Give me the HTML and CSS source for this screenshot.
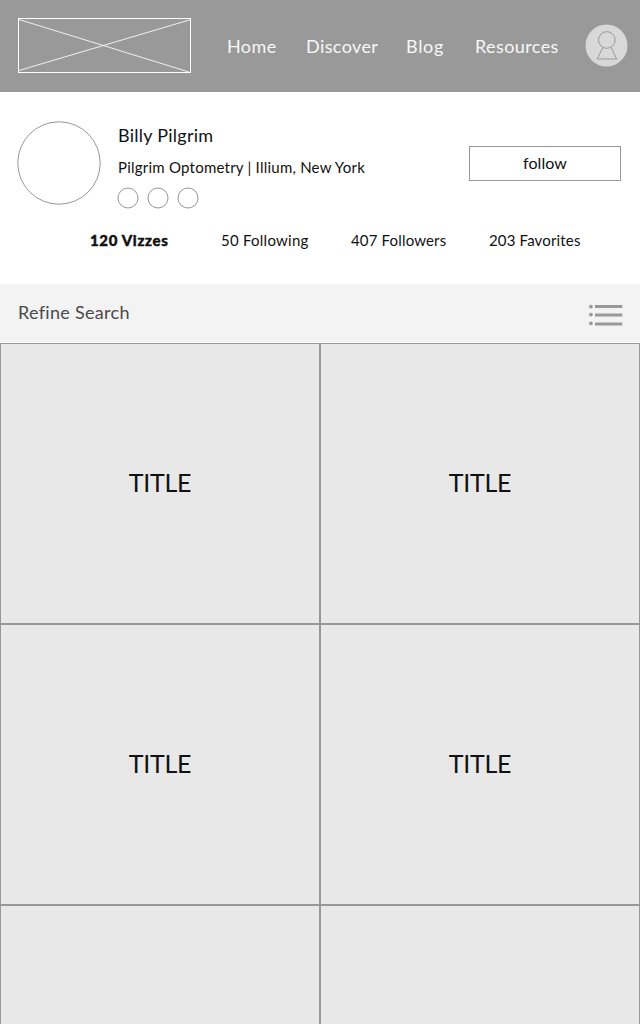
FILE: index.html
```
<!DOCTYPE html>
<html lang="en">
<head>
<meta charset="utf-8">
<title>Billy Pilgrim</title>
<link rel="stylesheet" href="styles.css">
</head>
<body>
<header class="topbar">
  <svg class="logo" width="174" height="55" viewBox="0 0 174 55" fill="none" stroke="#fff">
    <rect x=".5" y=".5" width="172" height="54"/>
    <path d="M1 1.5L171 54M1 52.5L173 1.5" stroke-opacity=".85"/>
  </svg>
  <nav class="nav">
    <a class="home">Home</a><a class="discover">Discover</a><a class="blog">Blog</a><a class="resources">Resources</a>
  </nav>
  <svg class="account" width="43" height="43" viewBox="0 0 43 43" fill="none" stroke="#999">
    <circle cx="21.5" cy="21.5" r="21" fill="#d8d8d8" stroke="none"/>
    <circle cx="21.8" cy="16" r="8.3"/>
    <path d="M17.8 23.6L12.2 35H31.7L26.3 23.6"/>
  </svg>
</header>
<section class="profile">
  <div class="person">
    <svg class="avatar" width="84" height="84" fill="none" stroke="#979797"><circle cx="42" cy="42" r="41.2"/></svg>
    <div class="details">
      <h1 class="name">Billy Pilgrim</h1>
      <p class="place">Pilgrim Optometry | Illium, New York</p>
      <svg class="social" width="84" height="22" fill="none" stroke="#979797">
        <circle cx="11" cy="11" r="10"/><circle cx="41" cy="11" r="10"/><circle cx="71" cy="11" r="10"/>
      </svg>
    </div>
    <button class="follow">follow</button>
  </div>
  <div class="stats">
    <span class="active">120 Vizzes</span><span class="following">50 Following</span><span class="followers">407 Followers</span><span class="favorites">203 Favorites</span>
  </div>
</section>
<div class="refine">
  <span class="refine-label">Refine Search</span>
  <svg class="list" width="34" height="22" viewBox="0 0 34 22" fill="#999">
    <circle cx="1.9" cy="2.6" r="1.9"/><circle cx="1.9" cy="10.6" r="1.9"/><circle cx="1.9" cy="19.3" r="1.9"/>
    <path d="M6 1h27.3v3H6zM6 9.6h27.3v3H6zM6 18.4h27.3v3H6z"/>
  </svg>
</div>
<main class="grid">
  <article class="tile">TITLE</article><article class="tile">TITLE</article>
  <article class="tile">TITLE</article><article class="tile">TITLE</article>
  <article class="tile last"></article><article class="tile last"></article>
</main>
</body>
</html>
```
FILE: styles.css
```
* { box-sizing: border-box; }
body {
  margin: 0;
  background: #fff;
  color: #111;
  font-family: Lato, "Liberation Sans", sans-serif;
}
.topbar {
  display: flex;
  height: 92px;
  padding: 18px 12px 0 18px;
  background: #999;
}
.logo { flex: none; }
.nav {
  display: grid;
  grid-template-columns: 79px 100px 69px 110px;
  margin-left: 35px;
  padding-top: 17px;
  color: #f7f7f7;
  font-size: 18px;
  line-height: 22px;
  letter-spacing: .4px;
  white-space: nowrap;
}
.blog { letter-spacing: .7px; }
.account { flex: none; margin-top: 6px; }
.profile { height: 192px; padding: 29px 19px 0 17px; }
.person { display: flex; height: 109px; }
.avatar { flex: none; }
.details { width: 368px; padding-left: 17px; white-space: nowrap; }
.name { margin: 3px 0 0; font-size: 18px; font-weight: 400; line-height: 22px; letter-spacing: .25px; }
.place { margin: 11px 0 0; font-size: 15px; line-height: 20px; letter-spacing: .23px; }
.social { display: block; margin: 10px 0 0 -1px; }
.follow {
  width: 152px;
  height: 35px;
  margin-top: 25px;
  padding: 0 0 2px;
  border: 1px solid #979797;
  background: #fff;
  color: #111;
  font: 16px/20px Lato, "Liberation Sans", sans-serif;
  letter-spacing: .1px;
}
.stats {
  display: grid;
  grid-template-columns: 131px 130px 138px 110px;
  padding-left: 73px;
  font-size: 15px;
  line-height: 20px;
  letter-spacing: .16px;
  white-space: nowrap;
}
.active { font-weight: 900; letter-spacing: .65px; -webkit-text-stroke: .4px #111; }
.following { letter-spacing: .25px; }
.refine {
  display: flex;
  justify-content: space-between;
  height: 59px;
  padding: 17px 17px 0 18px;
  border-bottom: 1px solid #fff;
  background: #f3f3f3;
  color: #4a4a4a;
  font-size: 18px;
  line-height: 22px;
  letter-spacing: .3px;
}
.list { margin-top: 3px; }
.grid { display: grid; grid-template-columns: 1fr 1fr; grid-template-rows: 281px 281px 119px; }
.tile {
  display: flex;
  align-items: center;
  justify-content: center;
  padding-bottom: 4px;
  border: 1px solid #979797;
  background: #e8e8e8;
  font-size: 25px;
  letter-spacing: -.3px;
}
.last { border-bottom: 0; }
```
